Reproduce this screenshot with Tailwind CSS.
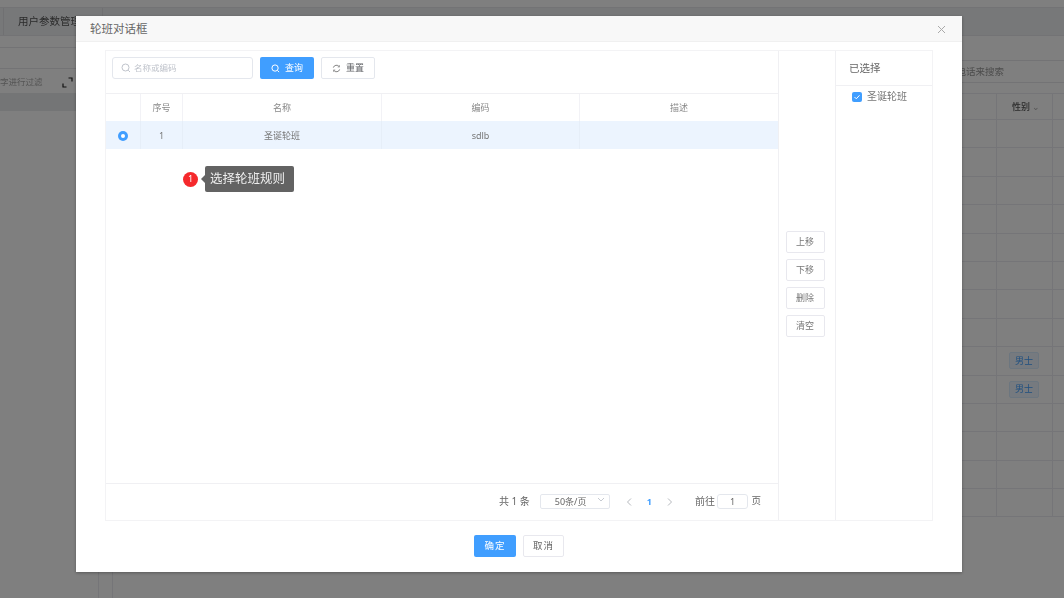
<!DOCTYPE html>
<html lang="en">

<head>
    <meta charset="UTF-8">
    <title>轮班对话框</title>
    <script src="https://cdn.jsdelivr.net/npm/@tailwindcss/browser@4"></script>
</head>

<body class="bg-white text-[#606266] font-['Noto_Sans','Noto_Sans_CJK_SC',sans-serif]">
    <div class="relative w-[1064px] h-[598px] overflow-hidden blur-[0.4px]">

        <!-- Page behind the dialog -->
        <div class="flex flex-col h-full">
            <div class="h-2 border-b border-[#e6e6ea]"></div>
            <div class="h-[28px] bg-[#eef0f3] border-b border-[#e6e6ea] pl-[3px] shrink-0">
                <div class="h-full w-[100px] border-x border-[#e0e0e4] pl-[14px] flex items-center text-[10.5px] text-[#555]">用户参数管理</div>
            </div>
            <div class="flex flex-1">
                <div class="w-[99px] border-r border-[#ebebf0] shrink-0">
                    <div class="h-[12px] border-b border-[#e6e6ea]"></div>
                    <div class="h-[21px] border-b border-[#e6e6ea]"></div>
                    <div class="h-[24px] pt-[2px] flex items-center justify-between pr-[25px] text-[8.500px] text-[#aaa]">
                        <span>字进行过滤</span>
                        <svg width="11" height="11" viewBox="0 0 11 11" fill="none" stroke="#222" stroke-width="1.200">
                            <path d="M6.500 1H10V4.500M1 6.500V10H4.500" />
                        </svg>
                    </div>
                    <div class="h-[18px] bg-[#e8eaed]"></div>
                </div>
                <div class="w-[14px] border-r border-[#ebebf0] shrink-0"></div>
                <div class="flex-1">
                    <div class="h-[25px] border-b border-[#e6e6ea]"></div>
                    <div class="h-[22px] pt-[1px] border-b border-[#e6e6ea] flex items-center justify-end pr-[60px] text-[9.500px] text-[#999]">电话来搜索</div>
                    <div class="h-[10px]"></div>
                    <div class="grid grid-cols-[884px_56px_1fr] grid-rows-[26px] auto-rows-[28.4px] border-t border-[#ebebf0] text-[9px] text-[#555]">
                        <div class="border-b border-r border-[#ebebf0]"></div>
                        <div class="border-b border-r border-[#ebebf0] flex items-center pl-[15px] font-medium">性别<span class="ml-[2px] text-[#aaa]">⌄</span></div>
                        <div class="border-b border-[#ebebf0]"></div>
                        <div class="border-b border-r border-[#ebebf0]"></div><div class="border-b border-r border-[#ebebf0]"></div><div class="border-b border-[#ebebf0]"></div>
                        <div class="border-b border-r border-[#ebebf0]"></div><div class="border-b border-r border-[#ebebf0]"></div><div class="border-b border-[#ebebf0]"></div>
                        <div class="border-b border-r border-[#ebebf0]"></div><div class="border-b border-r border-[#ebebf0]"></div><div class="border-b border-[#ebebf0]"></div>
                        <div class="border-b border-r border-[#ebebf0]"></div><div class="border-b border-r border-[#ebebf0]"></div><div class="border-b border-[#ebebf0]"></div>
                        <div class="border-b border-r border-[#ebebf0]"></div><div class="border-b border-r border-[#ebebf0]"></div><div class="border-b border-[#ebebf0]"></div>
                        <div class="border-b border-r border-[#ebebf0]"></div><div class="border-b border-r border-[#ebebf0]"></div><div class="border-b border-[#ebebf0]"></div>
                        <div class="border-b border-r border-[#ebebf0]"></div><div class="border-b border-r border-[#ebebf0]"></div><div class="border-b border-[#ebebf0]"></div>
                        <div class="border-b border-r border-[#ebebf0]"></div><div class="border-b border-r border-[#ebebf0]"></div><div class="border-b border-[#ebebf0]"></div>
                        <div class="border-b border-r border-[#ebebf0]"></div>
                        <div class="border-b border-r border-[#ebebf0] flex items-center pl-[12px]"><span class="w-[30px] h-[17px] rounded-[2px] bg-[#ecf5ff] border border-[#d9ecff] text-[#409eff] flex items-center justify-center">男士</span></div>
                        <div class="border-b border-[#ebebf0]"></div>
                        <div class="border-b border-r border-[#ebebf0]"></div>
                        <div class="border-b border-r border-[#ebebf0] flex items-center pl-[12px]"><span class="w-[30px] h-[17px] rounded-[2px] bg-[#ecf5ff] border border-[#d9ecff] text-[#409eff] flex items-center justify-center">男士</span></div>
                        <div class="border-b border-[#ebebf0]"></div>
                        <div class="border-b border-r border-[#ebebf0]"></div><div class="border-b border-r border-[#ebebf0]"></div><div class="border-b border-[#ebebf0]"></div>
                        <div class="border-b border-r border-[#ebebf0]"></div><div class="border-b border-r border-[#ebebf0]"></div><div class="border-b border-[#ebebf0]"></div>
                        <div class="border-b border-r border-[#ebebf0]"></div><div class="border-b border-r border-[#ebebf0]"></div><div class="border-b border-[#ebebf0]"></div>
                        <div class="border-b border-r border-[#ebebf0]"></div><div class="border-b border-r border-[#ebebf0]"></div><div class="border-b border-[#ebebf0]"></div>
                    </div>
                </div>
            </div>
        </div>

        <!-- Overlay -->
        <div class="absolute inset-0 bg-black/50"></div>

        <!-- Dialog -->
        <div class="absolute left-[76px] top-[16px] w-[886px] h-[556px] bg-white flex flex-col shadow-[0_1px_3px_rgba(0,0,0,0.3)]">
            <div class="h-[26px] bg-[#f8f8f8] border-b border-[#f0f0f0] flex items-center justify-between pl-[14px] pr-[16px] pt-[1px] shrink-0">
                <span class="text-[11.500px] text-[#666]">轮班对话框</span>
                <svg width="9" height="9" viewBox="0 0 9 9" stroke="#aaa" stroke-width="1" fill="none">
                    <path d="M1 1L8 8M8 1L1 8" />
                </svg>
            </div>

            <div class="ml-[29px] mt-[8px] w-[828px] h-[471px] border border-[#f3f3f5] flex shrink-0">
                <!-- Left: search and table -->
                <div class="w-[673px] border-r border-[#f0f0f3] flex flex-col">
                    <div class="h-[42px] pl-[6px] pb-[8px] flex items-center gap-[7px] shrink-0">
                        <div class="w-[141px] h-[22px] border border-[#e4e7ed] rounded-[3px] flex items-center pl-[8px] gap-[3px] text-[8.500px] text-[#c0c4cc]">
                            <svg width="10" height="10" viewBox="0 0 10 10" fill="none" stroke="#c0c4cc" stroke-width="1">
                                <circle cx="4.500" cy="4.500" r="3.500" />
                                <path d="M7.200 7.200L9 9" />
                            </svg>
                            名称或编码
                        </div>
                        <button class="w-[54px] h-[22px] bg-[#409eff] rounded-[2px] text-white text-[9px] flex items-center justify-center gap-[5px]">
                            <svg width="9" height="9" viewBox="0 0 10 10" fill="none" stroke="#fff" stroke-width="1.100">
                                <circle cx="4.500" cy="4.500" r="3.500" />
                                <path d="M7.200 7.200L9 9" />
                            </svg>
                            查询
                        </button>
                        <button class="w-[54px] h-[22px] border border-[#e4e7ed] rounded-[2px] text-[#606266] text-[9px] flex items-center justify-center gap-[5px]">
                            <svg width="9" height="9" viewBox="0 0 10 10" fill="none" stroke="#777" stroke-width="1">
                                <path d="M1.500 4A3.600 3.600 0 0 1 8 3M8.500 6A3.600 3.600 0 0 1 2 7" />
                                <path d="M8.300 1.300V3.300H6.300M1.700 8.700V6.700H3.700" stroke-width="0.700" />
                            </svg>
                            重置
                        </button>
                    </div>

                    <div class="flex-1 border-t border-[#f0f0f3]">
                        <div class="grid grid-cols-[35px_42px_199px_198px_1fr] h-[27px] text-[9px] text-[#888] text-center items-stretch">
                            <div class="border-r border-[#f2f2f6]"></div>
                            <div class="border-r border-[#f2f2f6] pt-[1px] flex items-center justify-center">序号</div>
                            <div class="border-r border-[#f2f2f6] pt-[1px] flex items-center justify-center">名称</div>
                            <div class="border-r border-[#f2f2f6] pt-[1px] flex items-center justify-center">编码</div>
                            <div class="pt-[1px] flex items-center justify-center">描述</div>
                        </div>
                        <div class="grid grid-cols-[35px_42px_199px_198px_1fr] h-[28px] bg-[#ecf4fe] text-[9px] text-[#777] text-center items-stretch">
                            <div class="border-r border-[#e6eef8] pt-[1px] flex items-center justify-center">
                                <span class="w-[10px] h-[10px] rounded-full bg-[#409eff] flex items-center justify-center"><span class="w-[4px] h-[4px] rounded-full bg-white"></span></span>
                            </div>
                            <div class="border-r border-[#e6eef8] pt-[1px] flex items-center justify-center">1</div>
                            <div class="border-r border-[#e6eef8] pt-[1px] flex items-center justify-center">圣诞轮班</div>
                            <div class="border-r border-[#e6eef8] pt-[1px] flex items-center justify-center">sdlb</div>
                            <div></div>
                        </div>
                    </div>

                    <div class="h-[37px] pb-[1px] border-t border-[#f0f0f3] flex items-center justify-end pr-[17px] text-[10px] text-[#666] shrink-0">
                        <span>共 1 条</span>
                        <div class="ml-[10px] w-[70px] h-[15px] border border-[#e4e7ed] rounded-[2px] flex items-center justify-between pl-[14px] pr-[4px] text-[9px]">
                            50条/页
                            <svg class="mb-[5px]" width="8" height="5" viewBox="0 0 8 5" fill="none" stroke="#c0c4cc" stroke-width="0.900">
                                <path d="M1 1L4 4L7 1" />
                            </svg>
                        </div>
                        <svg class="ml-[16px]" width="6" height="8" viewBox="0 0 6 8" fill="none" stroke="#b5b8bd" stroke-width="1">
                            <path d="M5 0.500L1.500 4L5 7.500" />
                        </svg>
                        <span class="ml-[15px] text-[9px] font-bold text-[#409eff]">1</span>
                        <svg class="ml-[15px]" width="6" height="8" viewBox="0 0 6 8" fill="none" stroke="#b5b8bd" stroke-width="1">
                            <path d="M1 0.500L4.500 4L1 7.500" />
                        </svg>
                        <span class="ml-[22px]">前往</span>
                        <div class="ml-[2px] w-[31px] h-[15px] border border-[#e4e7ed] rounded-[3px] flex items-center justify-center text-[9px]">1</div>
                        <span class="ml-[3.500px] text-[9.500px]">页</span>
                    </div>
                </div>

                <!-- Middle: move buttons -->
                <div class="w-[57px] border-r border-[#f0f0f3] flex flex-col items-center pt-[180px] gap-[6px] pr-[4px] text-[9px] text-[#777]">
                    <button class="w-[39px] h-[22px] border border-[#e8e8ee] rounded-[2px]">上移</button>
                    <button class="w-[39px] h-[22px] border border-[#e8e8ee] rounded-[2px]">下移</button>
                    <button class="w-[39px] h-[22px] border border-[#e8e8ee] rounded-[2px]">删除</button>
                    <button class="w-[39px] h-[22px] border border-[#e8e8ee] rounded-[2px]">清空</button>
                </div>

                <!-- Right: selected list -->
                <div class="flex-1">
                    <div class="h-[35px] pt-[1px] border-b border-[#f0f0f3] flex items-center pl-[13px] text-[10.500px] text-[#666]">已选择</div>
                    <div class="flex items-center pl-[16px] pt-[3px] gap-[5px] text-[10px] text-[#777]">
                        <span class="w-[10px] h-[10px] rounded-[2px] bg-[#409eff] flex items-center justify-center">
                            <svg width="8" height="8" viewBox="0 0 8 8" fill="none" stroke="#fff" stroke-width="1">
                                <path d="M1.500 4L3.300 5.800L6.500 2.300" />
                            </svg>
                        </span>
                        圣诞轮班
                    </div>
                </div>
            </div>

            <!-- Footer buttons -->
            <div class="flex justify-center gap-[7px] mt-[14px] text-[9.500px]">
                <button class="w-[42px] h-[22px] bg-[#409eff] rounded-[2px] text-white tracking-[1px]">确定</button>
                <button class="w-[41px] h-[22px] border border-[#e8e8ee] rounded-[2px] text-[#666] tracking-[1px]">取消</button>
            </div>

            <!-- Guide tooltip over the table -->
            <div class="absolute left-[107px] top-[150px] flex items-center">
                <span class="w-[15px] h-[15px] rounded-full bg-[#f5292c] text-white text-[9px] flex items-center justify-center">1</span>
                <span class="ml-[3px] w-0 h-0 border-y-[4px] border-y-transparent border-r-[4px] border-r-[#636363]"></span>
                <span class="w-[89px] h-[26px] bg-[#636363] rounded-[2px] text-[#eee] text-[12.500px] flex items-center pl-[5px] whitespace-nowrap">选择轮班规则</span>
            </div>
        </div>
    </div>
</body>

</html>
